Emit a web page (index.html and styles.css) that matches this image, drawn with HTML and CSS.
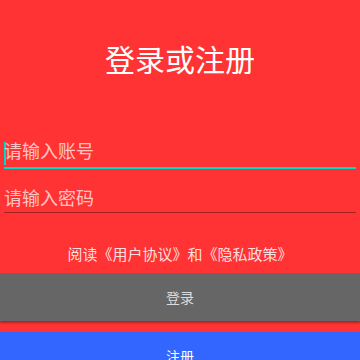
FILE: index.html
```html
<!DOCTYPE html>
<html lang="zh-CN">
<head>
    <meta charset="UTF-8">
    <meta name="viewport" content="width=device-width, initial-scale=1.0">
    <title>登录或注册</title>
    <link rel="stylesheet" href="styles.css">
</head>
<body>
    <div id="login-page">
        <h1 class="title">登录或注册</h1>

        <div class="field field-focused">
            <span class="caret"></span><span class="hint">请输入账号</span>
        </div>
        <div class="field">
            <span class="hint">请输入密码</span>
        </div>

        <p class="agreement">阅读《用户协议》和《隐私政策》</p>

        <button class="btn btn-login">登录</button>
        <button class="btn btn-register">注册</button>
    </div>
</body>
</html>
```

FILE: styles.css
```css
body {
  margin: 0;
  padding: 0;
  background-color: #ff3333;
  font-family: "Noto Sans CJK SC", "Noto Sans", sans-serif;
  overflow: hidden;
}

#login-page {
  display: flex;
  flex-direction: column;
}

.title {
  margin: 0;
  padding-top: 38px;
  height: 40px;
  line-height: 40px;
  font-size: 30px;
  font-weight: normal;
  color: #fff;
  text-align: center;
}

.field {
  box-sizing: border-box;
  height: 44px;
  margin: 0 4px;
  padding-top: 15px;
  line-height: 26px;
  font-size: 18px;
  border-bottom: 1px solid rgba(0, 0, 0, 0.35);
}

.field-focused {
  margin-top: 47px;
  padding-top: 12px;
  border-bottom: 2px solid #03dac5;
}

.hint {
  color: rgba(255, 255, 255, 0.72);
}

.caret {
  display: inline-block;
  width: 2px;
  height: 23px;
  margin-right: -2px;
  vertical-align: middle;
  background-color: #03dac5;
}

.agreement {
  margin: 31px 0 9px;
  line-height: 20px;
  font-size: 15px;
  text-align: center;
  color: rgba(255, 255, 255, 0.85);
}

.btn {
  display: block;
  width: 100%;
  height: 48px;
  border: none;
  padding: 0;
  font-family: inherit;
  font-size: 14px;
}

.btn-login {
  background-color: #666;
  color: #ddd;
  box-shadow: 0 2px 2px rgba(0, 0, 0, 0.3);
}

.btn-register {
  margin-top: 11px;
  background-color: #3366ff;
  color: #fff;
}
```
